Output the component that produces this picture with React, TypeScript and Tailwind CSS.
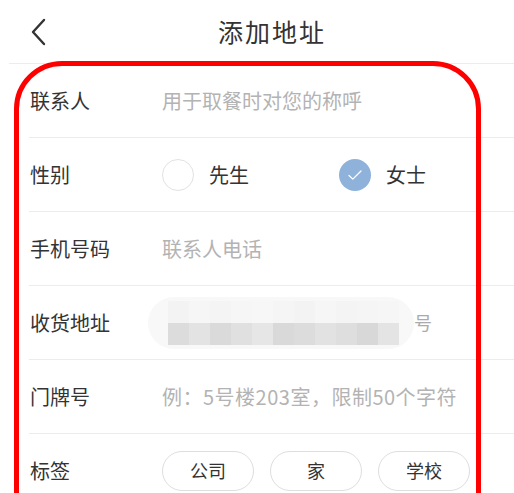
import React from 'react'

const font = { fontFamily: '"Noto Sans CJK SC", "Noto Sans", sans-serif' }

function Row({ label, children }: { label: string; children: React.ReactNode }) {
  return (
    <div className="flex h-[74px] items-center border-b border-[#ececec] pl-[1px]">
      <div className="w-[132px] shrink-0 text-[20px] text-[#333]">{label}</div>
      <div className="flex flex-1 items-center">{children}</div>
    </div>
  )
}

function Radio({ checked }: { checked?: boolean }) {
  if (checked) {
    return (
      <span className="flex h-[32px] w-[32px] items-center justify-center rounded-full bg-[#8fb2db]">
        <svg width="18" height="18" viewBox="0 0 18 18" fill="none">
          <path d="M3 9.5l3.8 3.6L15 5" stroke="#fff" strokeWidth="1.3" strokeLinecap="round" strokeLinejoin="round" />
        </svg>
      </span>
    )
  }
  return <span className="h-[32px] w-[32px] rounded-full border-[1.5px] border-[#e2e2e2]" />
}

// 주소 모자이크 처리
const cellsTop = ['#f3f3f3', '#f6f6f6', '#f4f4f4', '#f6f6f6', '#f7f7f7', '#f5f5f5', '#f3f3f3', '#f6f6f6', '#f4f4f4', '#f5f5f5', '#f6f6f6']
const cellsBottom = ['#dcdcdc', '#e3e3e3', '#dadada', '#e0e0e0', '#e6e6e6', '#d9d9d9', '#dcdcdc', '#e2e2e2', '#dedede', '#d8d8d8', '#e4e4e4']

export default function App() {
  return (
    <div className="relative h-[493px] w-full overflow-hidden bg-white" style={font}>
      {/* 헤더 */}
      <div className="ml-[9px] flex h-[64px] items-center border-b border-[#ececec]">
        <svg width="22" height="30" viewBox="0 0 22 30" className="ml-[19px]" fill="none">
          <path d="M16 3L5 15l11 12" stroke="#333" strokeWidth="2.4" strokeLinecap="round" strokeLinejoin="round" />
        </svg>
        <div className="ml-[168px] text-[25px] tracking-[2px] text-[#333]">添加地址</div>
      </div>

      <div className="ml-[29px]">
        <Row label="联系人">
          <span className="text-[20px] text-[#b3b3b3]">用于取餐时对您的称呼</span>
        </Row>
        <Row label="性别">
          <div className="flex items-center gap-[15px]">
            <Radio />
            <span className="text-[20px] text-[#333]">先生</span>
          </div>
          <div className="ml-[90px] flex items-center gap-[15px]">
            <Radio checked />
            <span className="text-[20px] text-[#333]">女士</span>
          </div>
        </Row>
        <Row label="手机号码">
          <span className="text-[20px] text-[#b3b3b3]">联系人电话</span>
        </Row>
        <Row label="收货地址">
          <div className="-ml-[14px] flex items-center">
            <div className="flex h-[52px] w-[266px] items-center rounded-full bg-[#f8f8f8] pl-[20px]">
              <div className="flex flex-col">
                <div className="flex">
                  {cellsTop.map((c, i) => (
                    <span key={i} className="h-[22px] w-[21px]" style={{ background: c }} />
                  ))}
                </div>
                <div className="flex">
                  {cellsBottom.map((c, i) => (
                    <span key={i} className="h-[22px] w-[21px]" style={{ background: c }} />
                  ))}
                </div>
              </div>
            </div>
            <span className="text-[18px] text-[#aaa]">号</span>
          </div>
        </Row>
        <Row label="门牌号">
          <span className="text-[20px] tracking-[0.5px] text-[#b3b3b3]">例：5号楼203室，限制50个字符</span>
        </Row>
        <Row label="标签">
          <div className="flex gap-[16px]">
            {['公司', '家', '学校'].map((t) => (
              <span
                key={t}
                className="flex h-[40px] w-[92px] items-center justify-center rounded-full border border-[#dedede] text-[18px] text-[#333]"
              >
                {t}
              </span>
            ))}
          </div>
        </Row>
      </div>

      {/* 빨간 표시 */}
      <div className="pointer-events-none absolute left-[14px] top-[61px] h-[500px] w-[467px] rounded-[48px] border-[5px] border-[#f00]" />
    </div>
  )
}
